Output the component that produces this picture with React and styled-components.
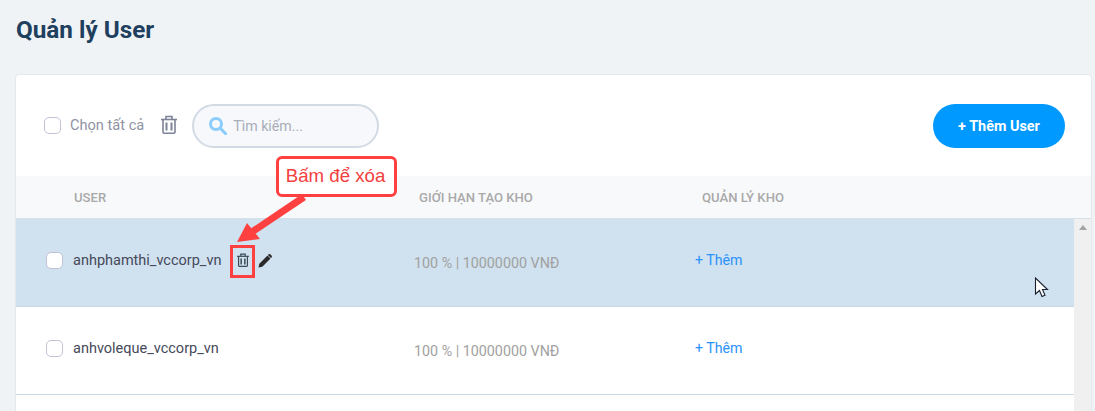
import React from "react";
import styled, { createGlobalStyle } from "styled-components";

const Global = createGlobalStyle`
  html, body { margin:0; padding:0; height:411px; overflow:hidden; background:#eff3f6; }
  body { font-family:Roboto, "Liberation Sans", sans-serif; }
`;

const Page = styled.div`
  position:relative;
  height:411px;
  padding:15px 3px 0 15px;
  box-sizing:border-box;
  overflow:hidden;
`;

const Title = styled.h1`
  margin:0 0 30px 1px;
  font-size:24.3px;
  line-height:29px;
  font-weight:700;
  color:#1f3f5f;
`;

const Card = styled.div`
  background:#fff;
  border:1px solid #e3e8ec;
  border-radius:4px;
  height:400px;
`;

const Toolbar = styled.div`
  display:flex;
  align-items:center;
  box-sizing:border-box;
  height:101px;
  padding:0 26px 0 28px;
`;

const Check = styled.span`
  display:block;
  flex:none;
  width:15px;
  height:15px;
  border:1px solid #c0c2d6;
  border-radius:5px;
  background:#fff;
`;

const SelectAll = styled.span`
  margin-left:9px;
  padding-bottom:2px;
  font-size:14.6px;
  color:#8f93a3;
`;

const ToolTrash = styled.span`
  display:flex;
  margin-left:17px;
  margin-right:15px;
  padding-bottom:2px;
`;

const SearchBox = styled.div`
  display:flex;
  align-items:center;
  gap:6px;
  width:187px;
  height:44px;
  padding-left:15px;
  box-sizing:border-box;
  border:2px solid #d2dae4;
  border-radius:22px;
  background:#f6f8fb;
  font-size:14.2px;
  color:#a9adb8;
`;

const AddButton = styled.button`
  margin-left:auto;
  width:132px;
  height:44px;
  padding-top:2px;
  border:0;
  border-radius:22px;
  background:#0099ff;
  color:#fff;
  font:700 14.4px Roboto, sans-serif;
`;

const HeadRow = styled.div`
  display:flex;
  align-items:center;
  height:42px;
  background:#f8f9fb;
  border-bottom:1px solid #d3dfe9;
`;

const HeadCell = styled.div`
  box-sizing:border-box;
  width:${(p) => p.$w}px;
  padding-left:${(p) => p.$pad}px;
  padding-top:1px;
  font-size:13.1px;
  font-weight:500;
  color:#a9a9a9;
`;

const Body = styled.div`
  display:flex;
`;

const Rows = styled.div`
  flex:1;
`;

const Row = styled.div`
  display:flex;
  align-items:center;
  height:87px;
  border-bottom:1px solid #c9d8e5;
  background:${(p) => (p.$active ? "#d0e1ef" : "#fff")};
`;

const UserCell = styled.div`
  display:flex;
  align-items:center;
  box-sizing:border-box;
  width:398px;
  padding-left:30px;
  padding-bottom:5px;
`;

const UserName = styled.span`
  margin-left:10px;
  font-size:14.5px;
  color:#45495a;
`;

const RowIcons = styled.span`
  display:flex;
  align-items:center;
  gap:9px;
  margin-left:16px;
`;

const Limit = styled.div`
  width:281px;
  padding-top:1px;
  font-size:14.3px;
  color:#a1a1a1;
`;

const AddLink = styled.a`
  padding-bottom:5px;
  font-size:14.2px;
  color:#2a92fb;
`;

const Scrollbar = styled.div`
  position:relative;
  flex:none;
  width:17px;
  height:300px;
  background:#f0f0f0;
  &::before {
    content:"";
    position:absolute;
    left:5px;
    top:6px;
    border:4px solid transparent;
    border-top:0;
    border-bottom:5px solid #a3a3a3;
  }
`;

const Callout = styled.div`
  position:absolute;
  left:276px;
  top:156px;
  box-sizing:border-box;
  width:121px;
  height:41px;
  padding-right:2px;
  border:3.5px solid #ff4040;
  border-radius:6px;
  background:#fff;
  color:#f44040;
  font:18.67px/33px "Liberation Sans", Arial, sans-serif;
  text-align:center;
  white-space:nowrap;
`;

const Highlight = styled.div`
  position:absolute;
  left:230px;
  top:245px;
  box-sizing:border-box;
  width:25px;
  height:33px;
  border:3px solid #ff4040;
`;

const Arrow = styled.svg`
  position:absolute;
  left:230px;
  top:190px;
`;

const Cursor = styled.svg`
  position:absolute;
  left:1034px;
  top:277px;
`;

const Trash = ({ w, h, color }) => (
  <svg width={w} height={h} viewBox="0 0 16 19" fill="none" stroke={color}>
    <path d="M0 4.5h16" strokeWidth="1.6" />
    <path d="M5 4.5V1.5h6v3" strokeWidth="1.6" />
    <path d="M2 4.5v12.5a1.2 1.2 0 0 0 1.2 1.2h9.6a1.2 1.2 0 0 0 1.2-1.2V4.5" strokeWidth="1.6" />
    <path d="M5.5 7.5v8M10.5 7.5v8" strokeWidth="2" />
  </svg>
);

const SearchIcon = () => (
  <svg width="18" height="18" viewBox="0 0 18 18" fill="none" stroke="#8accfb" strokeWidth="3">
    <circle cx="7" cy="7" r="5.5" />
    <path d="M11 11l6 6" strokeLinecap="round" />
  </svg>
);

const Pencil = () => (
  <svg width="15" height="15" viewBox="0 0 15 15">
    <path d="M0.5 14.5l.8-3.8L9.5 2.5l3 3-8.2 8.2z M10.5 1.5c.6-.6 1.4-.6 2 0l1 1c.6.6.6 1.4 0 2l-.6.5-3-3z" fill="#2b2b2b" />
  </svg>
);

const users = [
  { name: "anhphamthi_vccorp_vn", active: true },
  { name: "anhvoleque_vccorp_vn" },
];

export default function App() {
  return (
    <Page>
      <Global />
      <Title>Quản lý User</Title>
      <Card>
        <Toolbar>
          <Check />
          <SelectAll>Chọn tất cả</SelectAll>
          <ToolTrash><Trash w={16} h={19} color="#7d8398" /></ToolTrash>
          <SearchBox>
            <SearchIcon />
            <span>Tìm kiếm...</span>
          </SearchBox>
          <AddButton>+ Thêm User</AddButton>
        </Toolbar>
        <HeadRow>
          <HeadCell $w={398} $pad={58}>USER</HeadCell>
          <HeadCell $w={287} $pad={5}>GIỚI HẠN TẠO KHO</HeadCell>
          <HeadCell $w={200} $pad={1}>QUẢN LÝ KHO</HeadCell>
        </HeadRow>
        <Body>
          <Rows>
            {users.map((u) => (
              <Row key={u.name} $active={u.active}>
                <UserCell>
                  <Check />
                  <UserName>{u.name}</UserName>
                  {u.active && (
                    <RowIcons>
                      <Trash w={12} h={14} color="#3a4a55" />
                      <Pencil />
                    </RowIcons>
                  )}
                </UserCell>
                <Limit>100 % | 10000000 VNĐ</Limit>
                <AddLink>+ Thêm</AddLink>
              </Row>
            ))}
          </Rows>
          <Scrollbar />
        </Body>
      </Card>
      <Arrow width="90" height="60" viewBox="0 0 90 60">
        <path d="M74 7L22 42" stroke="#ff4040" strokeWidth="7" />
        <path d="M7 52L17 33L30 49z" fill="#ff4040" />
      </Arrow>
      <Callout>Bấm để xóa</Callout>
      <Highlight />
      <Cursor width="16" height="22" viewBox="0 0 16 22">
        <path d="M1.5 1v16l4-3.5 2.5 6 3-1.2-2.5-5.8h5z" fill="#fff" stroke="#1a2030" strokeWidth="1.1" />
      </Cursor>
    </Page>
  );
}
